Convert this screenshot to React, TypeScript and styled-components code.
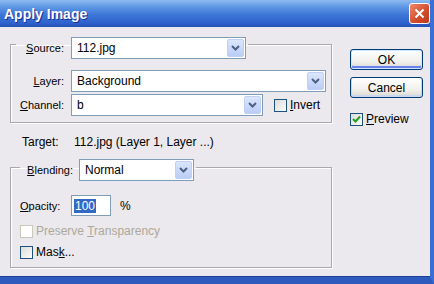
import React from 'react'
import styled, { createGlobalStyle } from 'styled-components'

const GlobalStyle = createGlobalStyle`
  html, body {
    margin: 0;
    padding: 0;
    background: #ece9ee;
  }
  body {
    font-family: Tahoma, "Liberation Sans", Arial, sans-serif;
    font-size: 11px;
    color: #000;
  }
  * {
    box-sizing: border-box;
  }
`

const Frame = styled.div`
  width: 434px;
  height: 284px;
  display: flex;
  flex-direction: column;
  background: #ece9ee;
  border-right: 4px solid #3a6fd6;
  border-bottom: 7px solid #2e59bd;
  box-shadow: inset 0 -1px 0 #1c3f95;
  overflow: hidden;
`

const TitleBar = styled.div`
  height: 27px;
  flex: none;
  display: flex;
  align-items: center;
  justify-content: space-between;
  padding: 0 0 0 4px;
  background: linear-gradient(#8dbbf2 0%, #5f98e4 25%, #3c76d6 55%, #2f63cc 85%, #2450b6 100%);
`

const Title = styled.span`
  font-family: "Liberation Sans", Arial, sans-serif;
  font-weight: bold;
  font-size: 14px;
  color: #fff;
  text-shadow: 1px 1px 0 #16309a;
`

const CloseButton = styled.div`
  width: 21px;
  height: 21px;
  border: 1px solid #fff;
  border-radius: 3px;
  background: linear-gradient(135deg, #f0896a, #d24b2a 60%, #b93a1c);
  display: flex;
  align-items: center;
  justify-content: center;
`

const Body = styled.div`
  flex: 1;
  display: flex;
  gap: 18px;
  padding: 2px 0 0 10px;
`

const MainColumn = styled.div`
  width: 322px;
  display: flex;
  flex-direction: column;
`

const SideColumn = styled.div`
  display: flex;
  flex-direction: column;
  padding-top: 20px;
`

const GroupBox = styled.fieldset<{ $padLeft: number; $padBottom: number }>`
  margin: 0;
  min-width: 0;
  padding: 0 5px ${({ $padBottom }) => $padBottom}px ${({ $padLeft }) => $padLeft}px;
  border: 1px solid #a9a7ab;
  box-shadow: inset 1px 1px 0 #fff, 1px 1px 0 #fff;
`

const Legend = styled.legend<{ $top: number; $left: number }>`
  padding: ${({ $top }) => $top}px 2px 0 0;
  margin-left: ${({ $left }) => $left}px;
`

const Row = styled.div<{ $mt?: number }>`
  display: flex;
  align-items: center;
  margin-top: ${({ $mt }) => $mt ?? 0}px;
`

const Label = styled.label<{ $width: number; $align?: string; $gap?: number }>`
  width: ${({ $width }) => $width}px;
  margin-right: ${({ $gap }) => $gap ?? 7}px;
  text-align: ${({ $align }) => $align ?? 'right'};
  white-space: nowrap;
`

const ComboBox = styled.div<{ $width: number }>`
  width: ${({ $width }) => $width}px;
  height: 22px;
  border: 1px solid #7f9db9;
  background: #fff;
  display: flex;
  align-items: stretch;
`

const ComboValue = styled.span`
  flex: 1;
  display: flex;
  align-items: center;
  padding-left: 5px;
  font-size: 12px;
`

const ComboArrow = styled.span`
  width: 17px;
  margin: 1px;
  border: 1px solid #bfd0f4;
  border-radius: 2px;
  background: linear-gradient(#dbe6fd, #bacdf6);
  display: flex;
  align-items: center;
  justify-content: center;
`

const CheckBox = styled.span<{ $disabled?: boolean }>`
  width: 13px;
  height: 13px;
  flex: none;
  border: 1px solid ${({ $disabled }) => ($disabled ? '#cac8bb' : '#1c5180')};
  background: ${({ $disabled }) => ($disabled ? '#fff' : 'linear-gradient(135deg, #dcdcd7, #fbfbf9)')};
  display: flex;
  align-items: center;
  justify-content: center;
`

const CheckLabel = styled.span<{ $disabled?: boolean }>`
  margin-left: 3px;
  font-size: 12px;
  line-height: 13px;
  color: ${({ $disabled }) => ($disabled ? '#aca899' : '#000')};
`

const TargetRow = styled.div`
  display: flex;
  height: 14px;
  align-items: center;
  margin: 12px 0 4px 12px;
  font-size: 12px;
`

const TargetLabel = styled.span`
  width: 52px;
`

const NumberField = styled.div`
  width: 40px;
  height: 21px;
  border: 1px solid #7f9db9;
  background: #fff;
  display: flex;
  align-items: center;
  padding-left: 2px;
`

const Selected = styled.span`
  background: #316ac5;
  color: #fff;
  font-size: 12px;
  padding: 0 1px;
`

const Unit = styled.span`
  margin-left: 9px;
  font-size: 12px;
`

const DialogButton = styled.button<{ $default?: boolean }>`
  width: 73px;
  height: 21px;
  margin-bottom: 7px;
  padding: 0;
  border: 1px solid #003c74;
  border-radius: 3px;
  font-family: inherit;
  font-size: 12px;
  color: #000;
  background: linear-gradient(#fff 0%, #f1f0ec 60%, #dcd8ce 100%);
  box-shadow: ${({ $default }) =>
    $default ? 'inset 0 0 0 1px #cee7ff, inset 0 -2px 0 1px #6982ee' : 'inset 0 -1px 0 1px #c9d6f2'};
`

const PreviewRow = styled.div`
  display: flex;
  align-items: center;
  margin-top: 8px;
`

const Chevron = () => (
  <svg width="9" height="6" viewBox="0 0 9 6">
    <path d="M1 1 L4.5 4.5 L8 1" fill="none" stroke="#4d6185" strokeWidth="2" />
  </svg>
)

const Combo = ({ width, value }: { width: number; value: string }) => (
  <ComboBox $width={width}>
    <ComboValue>{value}</ComboValue>
    <ComboArrow>
      <Chevron />
    </ComboArrow>
  </ComboBox>
)

const Check = ({ checked, disabled }: { checked?: boolean; disabled?: boolean }) => (
  <CheckBox $disabled={disabled}>
    {checked && (
      <svg width="9" height="9" viewBox="0 0 9 9">
        <path d="M1 4 L3.5 6.5 L8 1.5" fill="none" stroke="#21a121" strokeWidth="2" />
      </svg>
    )}
  </CheckBox>
)

const App: React.FC = () => (
  <>
    <GlobalStyle />
    <Frame>
      <TitleBar>
        <Title>Apply Image</Title>
        <CloseButton>
          <svg width="11" height="11" viewBox="0 0 11 11">
            <path d="M1.5 1.5 L9.5 9.5 M9.5 1.5 L1.5 9.5" stroke="#fff" strokeWidth="2" />
          </svg>
        </CloseButton>
      </TitleBar>
      <Body>
        <MainColumn>
          <GroupBox $padLeft={5} $padBottom={6}>
            <Legend $top={8} $left={0}>
              <Row>
                <Label $width={48}>
                  <u>S</u>ource:
                </Label>
                <Combo width={175} value="112.jpg" />
              </Row>
            </Legend>
            <Row $mt={11}>
              <Label $width={48}>
                <u>L</u>ayer:
              </Label>
              <Combo width={255} value="Background" />
            </Row>
            <Row $mt={2}>
              <Label $width={48}>
                <u>C</u>hannel:
              </Label>
              <Combo width={192} value="b" />
              <Row style={{ marginLeft: 11 }}>
                <Check />
                <CheckLabel>
                  <u>I</u>nvert
                </CheckLabel>
              </Row>
            </Row>
          </GroupBox>

          <TargetRow>
            <TargetLabel>Target:</TargetLabel>
            <span>112.jpg (Layer 1, Layer ...)</span>
          </TargetRow>

          <GroupBox $padLeft={9} $padBottom={8}>
            <Legend $top={6} $left={0}>
              <Row>
                <Label $width={53} $gap={6}>
                  <u>B</u>lending:
                </Label>
                <Combo width={115} value="Normal" />
              </Row>
            </Legend>
            <Row $mt={14}>
              <Label $width={51} $align="left" $gap={0}>
                <u>O</u>pacity:
              </Label>
              <NumberField>
                <Selected>100</Selected>
              </NumberField>
              <Unit>%</Unit>
            </Row>
            <Row $mt={9}>
              <Check disabled />
              <CheckLabel $disabled>
                Preserve <u>T</u>ransparency
              </CheckLabel>
            </Row>
            <Row $mt={8}>
              <Check />
              <CheckLabel>
                Mas<u>k</u>...
              </CheckLabel>
            </Row>
          </GroupBox>
        </MainColumn>

        <SideColumn>
          <DialogButton $default>OK</DialogButton>
          <DialogButton>Cancel</DialogButton>
          <PreviewRow>
            <Check checked />
            <CheckLabel>
              <u>P</u>review
            </CheckLabel>
          </PreviewRow>
        </SideColumn>
      </Body>
    </Frame>
  </>
)

export default App
